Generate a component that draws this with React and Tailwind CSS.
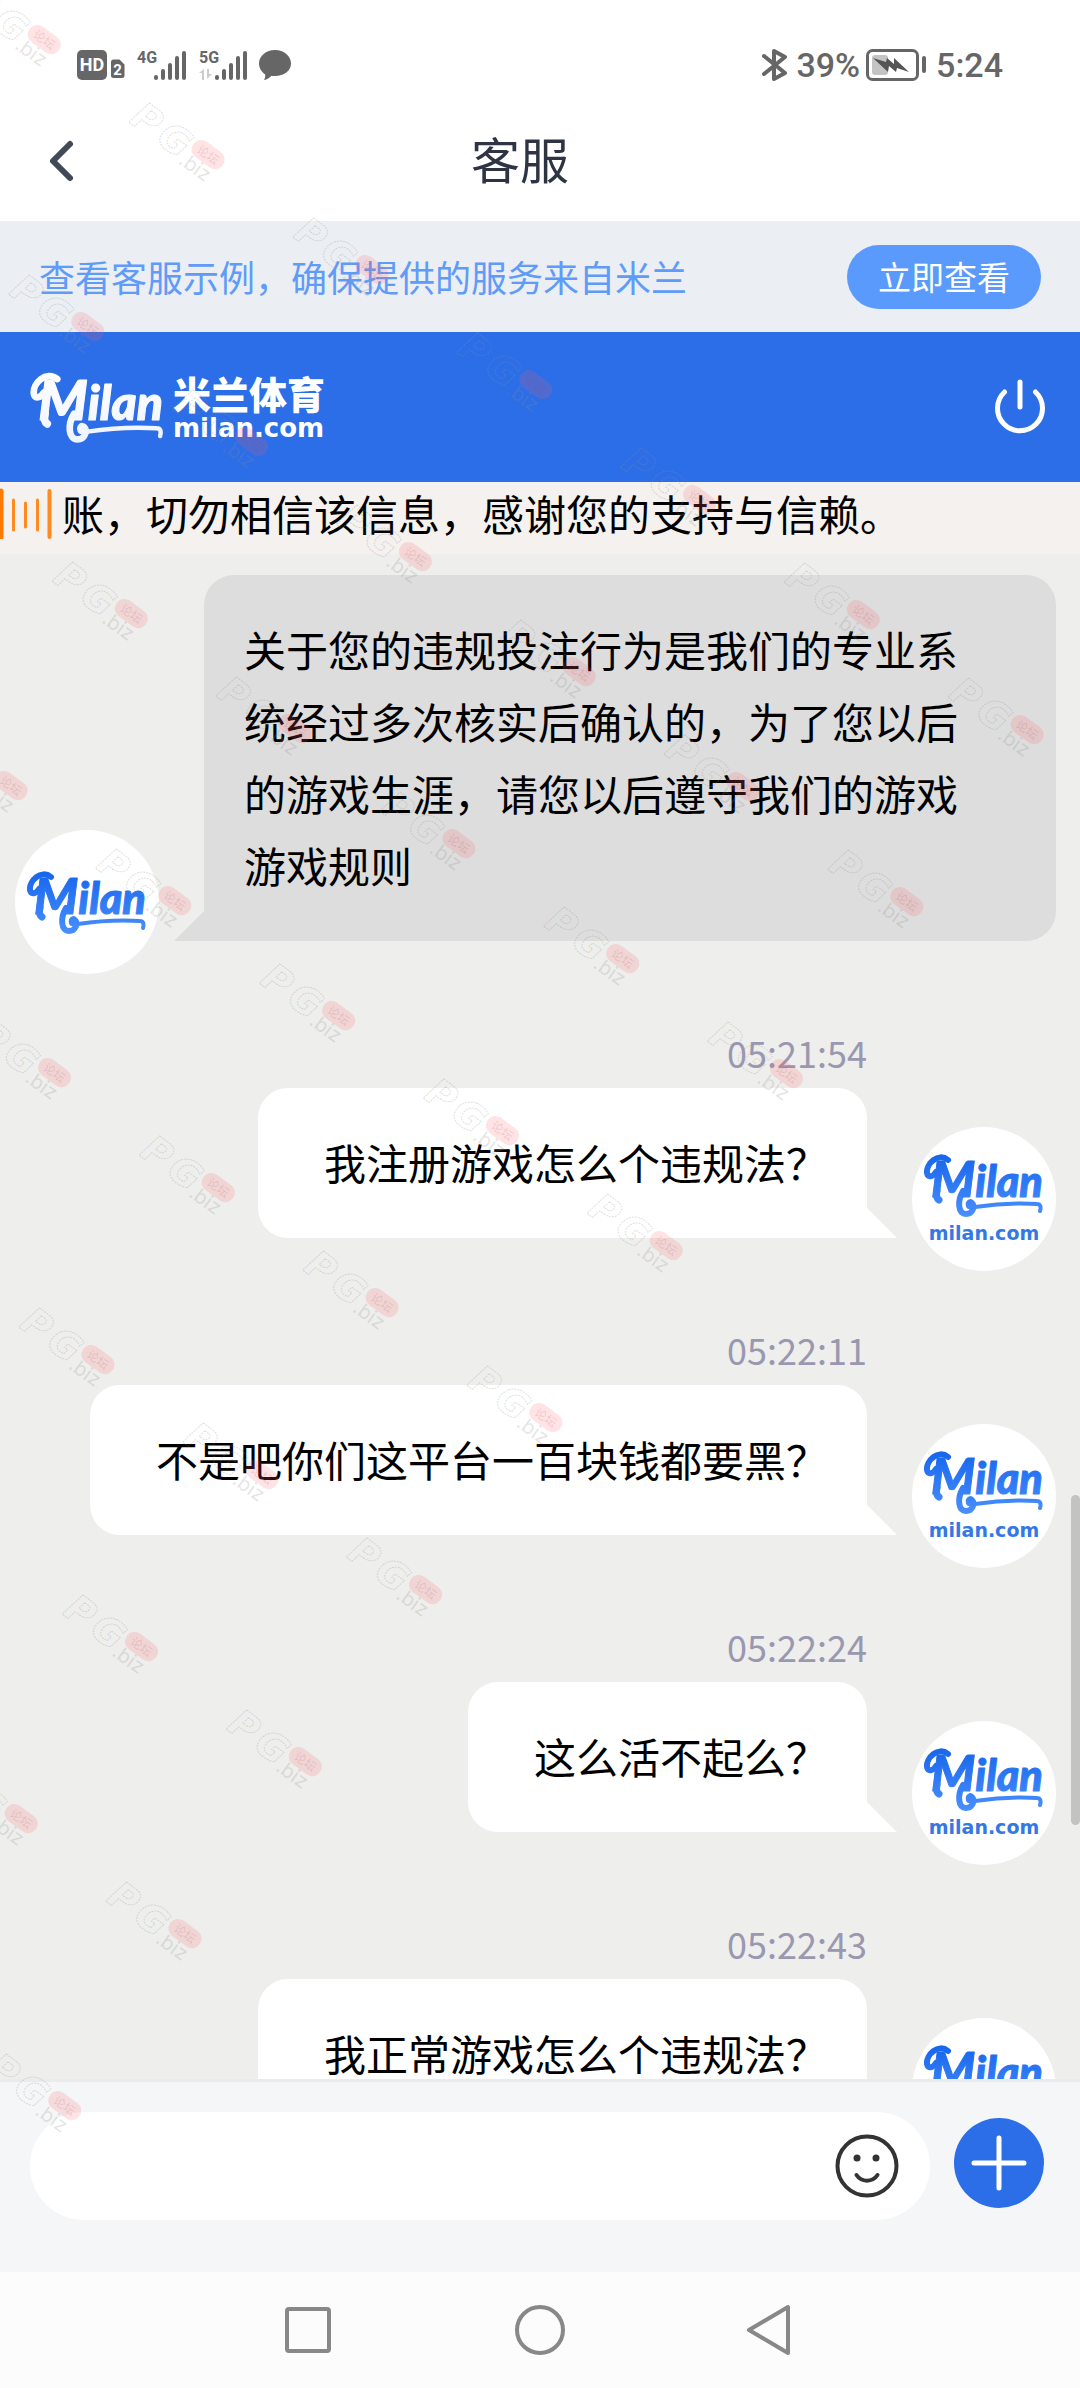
import { useState } from 'react';

const messages = [
  { time: '05:21:54', text: '我注册游戏怎么个违规法？' },
  { time: '05:22:11', text: '不是吧你们这平台一百块钱都要黑？' },
  { time: '05:22:24', text: '这么活不起么？' },
  { time: '05:22:43', text: '我正常游戏怎么个违规法？' },
];

// first and last column of every slanted watermark row
const watermarkRows = [
  [0, 6],
  [0, 5],
  [0, 4],
  [-1, 3],
  [-1, 2],
  [-1, 1],
  [-1, 0],
  [-2, -1],
  [-2, -2],
];

const watermarks = watermarkRows.flatMap(([from, to], row) => {
  const marks = [];
  for (let col = from; col <= to; col++) {
    marks.push({ x: 44 + col * 163.8 + row * 43.5, y: 40 + col * 115 + row * 287 });
  }
  return marks;
});

function Watermark() {
  return (
    <svg className="absolute inset-0 w-full h-full pointer-events-none" aria-hidden="true">
      {watermarks.map(({ x, y }) => (
        <g key={`${x}-${y}`} transform={`translate(${x} ${y}) rotate(36)`}>
          <g
            className="font-['DejaVu_Sans'] font-bold italic"
            fill="none"
            stroke="#8f8f8f"
            strokeOpacity="0.3"
            strokeWidth="1"
            strokeDasharray="2 1"
          >
            <text x="-84" y="20" fontSize="38">P</text>
            <text x="-51" y="20" fontSize="38">G</text>
          </g>
          <rect x="-18" y="-10" width="36" height="19" rx="9" fill="#ff5a64" fillOpacity="0.17" />
          <text
            x="-12"
            y="4"
            fontSize="12"
            className="font-['Noto_Sans_CJK_SC',sans-serif]"
            fill="#a04a50"
            fillOpacity="0.18"
          >
            论坛
          </text>
          <text x="-20" y="24" fontSize="20" className="font-['Inter']" fill="#8a8a8a" fillOpacity="0.22">
            .biz
          </text>
        </g>
      ))}
    </svg>
  );
}

function SignalBars() {
  return (
    <g strokeWidth="4" strokeLinecap="round" stroke="#666">
      <path d="M2 29v-1M9 29V22M16 29V16M23 29V9M30 29V4" />
    </g>
  );
}

function StatusBar() {
  return (
    <div className="flex h-[130px] items-center justify-between px-[77px] text-[#666]">
      <div className="flex items-center">
        <svg width="30" height="30" viewBox="0 0 30 30">
          <rect width="30" height="30" rx="5" fill="#666" />
          <text x="15" y="21" fontSize="18" fontWeight="700" textAnchor="middle" fill="#fff" className="font-['Roboto']">
            HD
          </text>
        </svg>
        <svg width="14" height="30" viewBox="0 0 14 30" className="ml-1">
          <path d="M2.500 9.500h6l5 5v11a2.500 2.500 0 0 1-2.500 2.500H2.500A2.500 2.500 0 0 1 0 25.500V12a2.500 2.500 0 0 1 2.500-2.500z" fill="#666" />
          <text x="6.500" y="24.500" fontSize="15" fontWeight="700" textAnchor="middle" fill="#fff" className="font-['Roboto']">
            2
          </text>
        </svg>
        <svg width="52" height="32" viewBox="0 0 52 32" className="ml-3 overflow-visible">
          <text x="0" y="14" fontSize="16" fontWeight="700" fill="#666" className="font-['Roboto']">
            4G
          </text>
          <g transform="translate(17 0)">
            <SignalBars />
          </g>
        </svg>
        <svg width="52" height="32" viewBox="0 0 52 32" className="ml-2.5 overflow-visible">
          <text x="0" y="14" fontSize="16" fontWeight="700" fill="#666" className="font-['Roboto']">
            5G
          </text>
          <path d="M0 24l5-4v11H3v-7zM13 25l-5 5V20h2v5z" fill="#ccc" />
          <g transform="translate(16 0)">
            <SignalBars />
          </g>
        </svg>
        <svg width="32" height="32" viewBox="0 0 32 32" className="ml-2">
          <path d="M16 1c9 0 16 6 16 13.500S25 27 16 27c-1.500 0-2.500 0-3.500-.3C10.500 29 8 30.500 5 31c1-1.500 1.500-3.500 1.200-5.500C2.500 23 0 19 0 14.500 0 7 7 1 16 1z" fill="#666" />
        </svg>
      </div>
      <div className="flex items-center font-['Roboto'] text-[34px] font-medium leading-none">
        <svg width="26" height="32" viewBox="0 0 26 32" fill="none" stroke="#666" strokeWidth="4" strokeLinejoin="round" strokeLinecap="round">
          <path d="M2 7l21 17-11 6V2l11 6L2 25" />
        </svg>
        <span className="ml-2">39%</span>
        <svg width="62" height="32" viewBox="0 0 62 32" className="ml-1.5">
          <rect x="1.500" y="1.500" width="50" height="29" rx="5" fill="none" stroke="#666" strokeWidth="3" />
          <rect x="6" y="6" width="16" height="20" rx="3" fill="#c4c4c4" />
          <path d="M7 9l13 4 1-4 7 6 0-6 15 14-12-4-1 4-7-6-1 6z" fill="#555" />
          <rect x="56" y="7" width="4" height="17" rx="2" fill="#666" />
        </svg>
        <span className="ml-2">5:24</span>
      </div>
    </div>
  );
}

function MilanMark({ className, light }) {
  const id = light ? 'milan-light' : 'milan-blue';
  return (
    <svg viewBox="0 0 120 68" className={className} role="img" aria-label="Milan">
      <defs>
        <linearGradient id={id} x1="0" y1="0" x2="0" y2="68" gradientUnits="userSpaceOnUse">
          <stop offset="0" stopColor={light ? '#ffffff' : '#1463ea'} />
          <stop offset="1" stopColor={light ? '#eef3fd' : '#4a90ff'} />
        </linearGradient>
      </defs>
      <text
        x="7"
        y="46"
        fontSize="43"
        fill={`url(#${id})`}
        stroke={`url(#${id})`}
        strokeWidth="1"
        strokeLinejoin="round"
        className="font-['Lato'] font-black italic"
      >
        <tspan fontSize="50">M</tspan>
        ilan
      </text>
      <g fill="none" stroke={`url(#${id})`} strokeLinecap="round">
        <path d="M24 9C14 1 2 13 3 22c1 5 6 4 9-1" strokeWidth="6" />
        <path d="M13 40c-1 4-1 7 2 9" strokeWidth="7" />
        <path d="M39 40c-6 10-5 23 3 23 7 0 9-8 6-11-2-2-4 0-3 3" strokeWidth="6" />
        <path d="M51 56c20-3 45-4 62-3 4 0 4 4 3 7" strokeWidth="4" />
      </g>
    </svg>
  );
}

function Avatar({ withDomain }) {
  return (
    <div className="flex size-36 shrink-0 flex-col items-center justify-center rounded-full bg-white">
      <MilanMark className="h-[68px] w-[120px]" />
      {withDomain && (
        <span className="font-['DejaVu_Sans'] text-[19px] font-bold leading-7 text-[#3478e5]">milan.com</span>
      )}
    </div>
  );
}

function AgentMessage({ children }) {
  return (
    <div className="flex items-end pl-[15px] pr-6 pt-[21px]">
      <Avatar />
      <div className="relative mb-[33px] ml-[45px] flex-1 rounded-[30px] rounded-bl-none bg-[#ddd] pb-10 pl-10 pr-20 pt-[38px] text-[42px] leading-[72px]">
        {children}
        <svg className="absolute bottom-0 right-full" width="30" height="30" viewBox="0 0 30 30">
          <path d="M30 0v30H0z" fill="#ddd" />
        </svg>
      </div>
    </div>
  );
}

function UserMessage({ time, children }) {
  return (
    <div className="flex items-end justify-end pr-6 pt-[50px]">
      <div className="mb-[33px] mr-[45px] flex flex-col items-end">
        <time className="mb-2 text-4xl leading-[56px] text-[#9a97b0]">{time}</time>
        <div className="relative rounded-[30px] rounded-br-none bg-white pb-10 pl-[66px] pr-[39px] pt-[38px] text-[42px] leading-[72px]">
          {children}
          <svg className="absolute bottom-0 left-full" width="30" height="30" viewBox="0 0 30 30">
            <path d="M0 0v30h30z" fill="#fff" />
          </svg>
        </div>
      </div>
      <Avatar withDomain />
    </div>
  );
}

export default function App() {
  const [draft, setDraft] = useState('');

  return (
    <div className="relative flex h-screen flex-col overflow-hidden bg-white font-['Noto_Sans_CJK_SC',sans-serif] text-black">
      <StatusBar />

      <header className="flex h-[91px] items-start pl-[42px] pr-[120px]">
        <button type="button" aria-label="返回" className="flex h-[62px] items-center">
          <svg width="38" height="44" viewBox="0 0 38 44" fill="none" stroke="#434a57" strokeWidth="6" strokeLinecap="round" strokeLinejoin="round">
            <path d="M28 5L11 22l17 17" />
          </svg>
        </button>
        <h1 className="flex-1 text-center text-[49px] leading-[56px] text-[#2f3445]">客服</h1>
      </header>

      <div className="flex h-[111px] shrink-0 items-center justify-between bg-[#ebeef3] px-[39px]">
        <p className="pb-0.5 text-4xl text-[#5f9bf8]">查看客服示例，确保提供的服务来自米兰</p>
        <button type="button" className="h-16 rounded-full bg-[#5b9afd] px-[31px] text-[33px] leading-none text-white">
          立即查看
        </button>
      </div>

      <div className="flex h-[150px] shrink-0 items-center justify-between bg-[#2c6ee7] pl-[30px] pr-[34px] text-white">
        <div className="flex items-center gap-2">
          <MilanMark light className="h-[76px] w-[135px]" />
          <div className="flex flex-col">
            <span className="text-[38px] font-black leading-[42px]">米兰体育</span>
            <span className="font-['DejaVu_Sans'] text-[26px] font-bold leading-7">milan.com</span>
          </div>
        </div>
        <button type="button" aria-label="退出">
          <svg width="52" height="56" viewBox="0 0 52 56" fill="none" stroke="#fff" strokeWidth="5" strokeLinecap="round">
            <path d="M26 3v25M10.500 13a22.500 22.500 0 1 0 31 0" />
          </svg>
        </button>
      </div>

      <div className="flex h-[72px] shrink-0 items-center bg-[#f4f1ee] pb-2.5">
        <svg width="62" height="52" viewBox="0 0 62 52" fill="none" stroke="#ff8a1f" strokeLinecap="round" strokeWidth="3">
          <path d="M1 4v46" stroke="#ff7a00" strokeWidth="5" />
          <path d="M13.500 13v30M25.500 16v24M37.500 13v30" />
          <path d="M49.500 4v46" strokeWidth="4" />
        </svg>
        <p className="whitespace-nowrap text-[42px] leading-[60px]">账，切勿相信该信息，感谢您的支持与信赖。</p>
      </div>

      <main className="relative min-h-0 flex-1 overflow-hidden border-b-3 border-[#ebebeb] bg-[#eeeeec]">
        <AgentMessage>
          关于您的违规投注行为是我们的专业系统经过多次核实后确认的，为了您以后的游戏生涯，请您以后遵守我们的游戏游戏规则
        </AgentMessage>
        {messages.map((m) => (
          <UserMessage key={m.time} time={m.time}>
            {m.text}
          </UserMessage>
        ))}
        <div className="absolute right-0 top-[941px] h-[330px] w-[9px] rounded-full bg-[#c3c3c2]" />
      </main>

      <form
        className="flex h-[190px] shrink-0 items-start gap-6 bg-[#f5f6f7] pl-[30px] pr-9 pt-[30px]"
        onSubmit={(e) => e.preventDefault()}
      >
        <div className="flex h-[108px] flex-1 items-center rounded-full bg-white pl-12 pr-[31px]">
          <input
            type="text"
            aria-label="消息"
            value={draft}
            onChange={(e) => setDraft(e.target.value)}
            className="min-w-0 flex-1 text-[42px] outline-none"
          />
          <button type="button" aria-label="表情">
            <svg width="64" height="64" viewBox="0 0 64 64" fill="none" stroke="#333" strokeWidth="4" strokeLinecap="round">
              <circle cx="32" cy="32" r="29.500" />
              <path d="M21.500 41c5 7.500 16 7.500 21 0" />
              <circle cx="22" cy="24" r="3.500" fill="#333" stroke="none" />
              <circle cx="41" cy="24" r="3.500" fill="#333" stroke="none" />
            </svg>
          </button>
        </div>
        <div className="py-1.5">
          <button type="button" aria-label="更多" className="block rounded-full bg-[#2c6ee7]">
            <svg width="90" height="90" viewBox="0 0 90 90" stroke="#fff" strokeWidth="5" strokeLinecap="round">
              <path d="M45 20v50M20 45h50" />
            </svg>
          </button>
        </div>
      </form>

      <nav className="flex h-[116px] shrink-0 items-center justify-center gap-[180px] bg-[#fcfcfc]">
        <button type="button" aria-label="最近任务">
          <svg width="52" height="52" viewBox="0 0 52 52" fill="none" stroke="#888" strokeWidth="4">
            <rect x="5" y="5" width="42" height="42" rx="2" />
          </svg>
        </button>
        <button type="button" aria-label="主屏幕">
          <svg width="52" height="52" viewBox="0 0 52 52" fill="none" stroke="#888" strokeWidth="4">
            <circle cx="26" cy="26" r="23" />
          </svg>
        </button>
        <button type="button" aria-label="后退">
          <svg width="52" height="52" viewBox="0 0 52 52" fill="none" stroke="#888" strokeWidth="4" strokeLinejoin="round">
            <path d="M42 3v46L3 26z" />
          </svg>
        </button>
      </nav>

      <Watermark />
    </div>
  );
}
